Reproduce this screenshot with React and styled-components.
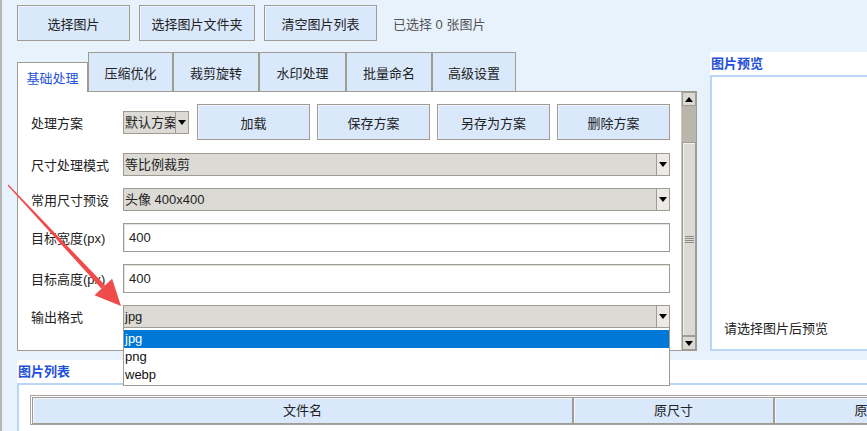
import React from "react";
import styled, { createGlobalStyle } from "styled-components";

const GlobalStyle = createGlobalStyle`
  * { box-sizing: border-box; }
  html, body { margin: 0; padding: 0; }
  body {
    width: 867px;
    height: 431px;
    overflow: hidden;
    background: linear-gradient(to right, #b6b6b6 2px, #e8f2fd 2px);
    font-family: "Liberation Sans", "Noto Sans CJK SC", sans-serif;
    font-size: 13px;
    color: #222;
  }
`;

const Page = styled.div`
  position: relative;
  width: 867px;
  height: 431px;
  overflow: hidden;
  padding-left: 17px;
  display: flex;
  flex-direction: column;
`;

const Toolbar = styled.div`
  display: flex;
  align-items: center;
  gap: 9px;
  margin-top: 5px;
  height: 36px;
`;

const Button = styled.button`
  width: ${(p) => p.w || 113}px;
  height: ${(p) => p.h || 36}px;
  flex: none;
  padding: 0;
  background: #dae8fc;
  border: 1px solid #a09c94;
  box-shadow: inset 1px 1px 0 #eef5ff;
  font: inherit;
  color: #222;
`;

const Status = styled.span`
  margin-left: 7px;
  color: #555;
`;

const Main = styled.div`
  display: flex;
  gap: 13px;
  margin-top: 11px;
  height: 299px;
`;

const LeftCol = styled.div`
  width: 680px;
  flex: none;
  display: flex;
  flex-direction: column;
`;

const TabBar = styled.div`
  display: flex;
  align-items: flex-end;
  height: 39px;
`;

const Tab = styled.div`
  width: ${(p) => p.w}px;
  height: ${(p) => (p.active ? 30 : 39)}px;
  display: flex;
  align-items: center;
  justify-content: center;
  border: 1px solid #a09c94;
  border-bottom: none;
  background: ${(p) => (p.active ? "#fff" : "#dae8fc")};
  color: ${(p) => (p.active ? "#1f52dc" : "#222")};
  position: relative;
  z-index: ${(p) => (p.active ? 1 : 0)};
  margin-bottom: ${(p) => (p.active ? -1 : 0)}px;
`;

const Panel = styled.div`
  height: 260px;
  border: 1px solid #a09c94;
  background: #fff;
  display: flex;
`;

const Form = styled.div`
  flex: 1;
  padding: 12px 11px 0 13px;
  display: flex;
  flex-direction: column;
  gap: 12px;
`;

const Row = styled.div`
  display: flex;
  align-items: center;
  height: ${(p) => p.h}px;
  margin-bottom: ${(p) => p.mb || 0}px;
`;

const Label = styled.div`
  width: 92px;
  flex: none;
  white-space: nowrap;
`;

const ComboWrap = styled.div`
  position: relative;
  flex: ${(p) => (p.w ? "none" : 1)};
  width: ${(p) => (p.w ? `${p.w}px` : "auto")};
  height: 23px;
  display: flex;
  border: 1px solid #a09c94;
  background: #dcdad5;
`;

const ComboValue = styled.div`
  flex: 1;
  padding-left: 1px;
  line-height: 21px;
  white-space: nowrap;
  overflow: hidden;
`;

const ComboButton = styled.div`
  width: 13px;
  flex: none;
  border-left: 1px solid #a09c94;
  background: ${(p) => (p.light ? "#eceae6" : "#dcdad5")};
  display: flex;
  align-items: center;
  justify-content: center;
`;

const Triangle = styled.span`
  width: 0;
  height: 0;
  border-left: 4px solid transparent;
  border-right: 4px solid transparent;
  ${(p) =>
    p.up ? "border-bottom: 5px solid #000;" : "border-top: 5px solid #000;"}
`;

const Input = styled.div`
  flex: 1;
  height: 29px;
  border: 1px solid #a09c94;
  box-shadow: inset 1px 1px 0 #e4e2dc;
  background: #fff;
  padding-left: 5px;
  line-height: 27px;
`;

const ButtonGroup = styled.div`
  display: flex;
  gap: 7px;
  margin-left: 8px;
`;

const DropList = styled.div`
  position: absolute;
  left: -1px;
  right: -1px;
  top: 21px;
  height: 59px;
  border: 1px solid #a09c94;
  background: #fff;
  padding-top: 2px;
  z-index: 5;
`;

const DropItem = styled.div`
  height: 18px;
  line-height: 18px;
  padding-left: 1px;
  background: ${(p) => (p.selected ? "#0078d7" : "transparent")};
  color: ${(p) => (p.selected ? "#fff" : "#111")};
`;

const Scrollbar = styled.div`
  width: 15px;
  flex: none;
  display: flex;
  flex-direction: column;
  border-left: 1px solid #c8c6c0;
  background: #bab6ab;
`;

const ScrollButton = styled.div`
  height: 14px;
  flex: none;
  background: #dcdad5;
  border: 1px solid #a09c94;
  display: flex;
  align-items: center;
  justify-content: center;
`;

const ScrollTrack = styled.div`
  height: 36px;
  flex: none;
`;

const ScrollThumb = styled.div`
  flex: 1;
  background: #dcdad5;
  border: 1px solid #a09c94;
  box-shadow: inset 1px 1px 0 #f2f1ee;
  display: flex;
  align-items: center;
  justify-content: center;
`;

const Grip = styled.div`
  width: 9px;
  height: 7px;
  background: repeating-linear-gradient(
    to bottom,
    #8e8b84 0,
    #8e8b84 1px,
    transparent 1px,
    transparent 2px
  );
`;

const Preview = styled.div`
  flex: 1;
  min-width: 0;
  display: flex;
  flex-direction: column;
`;

const SectionTitle = styled.div`
  height: ${(p) => p.h || 23}px;
  line-height: ${(p) => p.h || 23}px;
  padding-left: 1px;
  background: #fff;
  color: #1f50da;
  font-weight: bold;
`;

const PreviewBox = styled.div`
  flex: 1;
  background: #fff;
  border: 2px solid #b9d7f5;
  border-right: none;
  display: flex;
  align-items: flex-end;
  padding: 0 12px 12px;
  white-space: nowrap;
`;

const ListSection = styled.div`
  margin-top: 9px;
  flex: 1;
  background: #fff;
  display: flex;
  flex-direction: column;
`;

const ListBox = styled.div`
  flex: 1;
  border-top: 2px solid #b9d7f5;
  border-left: 2px solid #b9d7f5;
  padding: 10px 0 0 11px;
`;

const TableFrame = styled.div`
  display: flex;
  border: 1px solid #a8a59e;
  border-right: none;
  padding: 1px 0 0 1px;
`;

const HeadCell = styled.div`
  width: ${(p) => p.w}px;
  flex: none;
  height: 27px;
  line-height: 25px;
  text-align: center;
  background: #dae8fc;
  border: 1px solid #a09c94;
  box-shadow: inset 1px 1px 0 #f3f7fd;
  white-space: nowrap;
  overflow: hidden;
`;

const Overlay = styled.svg`
  position: absolute;
  left: 0;
  top: 0;
  pointer-events: none;
  z-index: 10;
`;

const tabs = [
  { name: "基础处理", w: 71, active: true },
  { name: "压缩优化", w: 85 },
  { name: "裁剪旋转", w: 86 },
  { name: "水印处理", w: 87 },
  { name: "批量命名", w: 86 },
  { name: "高级设置", w: 84 },
];

const Combo = ({ value, w, light, children }) => (
  <ComboWrap w={w}>
    <ComboValue>{value}</ComboValue>
    <ComboButton light={light}>
      <Triangle />
    </ComboButton>
    {children}
  </ComboWrap>
);

export default function App() {
  return (
    <>
      <GlobalStyle />
      <Page>
        <Toolbar>
          <Button>选择图片</Button>
          <Button w={116}>选择图片文件夹</Button>
          <Button>清空图片列表</Button>
          <Status>已选择 0 张图片</Status>
        </Toolbar>

        <Main>
          <LeftCol>
            <TabBar>
              {tabs.map((t) => (
                <Tab key={t.name} w={t.w} active={t.active}>
                  {t.name}
                </Tab>
              ))}
            </TabBar>
            <Panel>
              <Form>
                <Row h={36} mb={1}>
                  <Label>处理方案</Label>
                  <Combo value="默认方案" w={66} />
                  <ButtonGroup>
                    <Button>加载</Button>
                    <Button>保存方案</Button>
                    <Button>另存为方案</Button>
                    <Button>删除方案</Button>
                  </ButtonGroup>
                </Row>
                <Row h={23}>
                  <Label>尺寸处理模式</Label>
                  <Combo value="等比例裁剪" light />
                </Row>
                <Row h={23}>
                  <Label>常用尺寸预设</Label>
                  <Combo value="头像 400x400" light />
                </Row>
                <Row h={29}>
                  <Label>目标宽度(px)</Label>
                  <Input>400</Input>
                </Row>
                <Row h={29}>
                  <Label>目标高度(px)</Label>
                  <Input>400</Input>
                </Row>
                <Row h={23}>
                  <Label>输出格式</Label>
                  <Combo value="jpg" light>
                    <DropList>
                      <DropItem selected>jpg</DropItem>
                      <DropItem>png</DropItem>
                      <DropItem>webp</DropItem>
                    </DropList>
                  </Combo>
                </Row>
              </Form>
              <Scrollbar>
                <ScrollButton>
                  <Triangle up />
                </ScrollButton>
                <ScrollTrack />
                <ScrollThumb>
                  <Grip />
                </ScrollThumb>
                <ScrollButton>
                  <Triangle />
                </ScrollButton>
              </Scrollbar>
            </Panel>
          </LeftCol>

          <Preview>
            <SectionTitle>图片预览</SectionTitle>
            <PreviewBox>请选择图片后预览</PreviewBox>
          </Preview>
        </Main>

        <ListSection>
          <SectionTitle h={23}>图片列表</SectionTitle>
          <ListBox>
            <TableFrame>
              <HeadCell w={541}>文件名</HeadCell>
              <HeadCell w={201}>原尺寸</HeadCell>
              <HeadCell w={200}>原大小</HeadCell>
            </TableFrame>
          </ListBox>
        </ListSection>

        <Overlay width="867" height="431" viewBox="0 0 867 431">
          <polygon
            points="7.6,185.4 8.4,184.6 105.1,285.3 101.5,288.7"
            fill="#ef4b4b"
          />
          <polygon
            points="121,306 94.5,295.2 112.1,278.8"
            fill="#ef4b4b"
          />
        </Overlay>
      </Page>
    </>
  );
}
